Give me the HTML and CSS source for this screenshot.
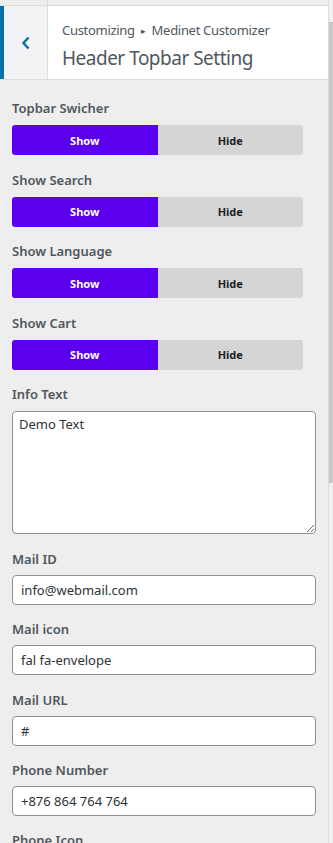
FILE: index.html
```html
<!DOCTYPE html>
<html lang="en">
<head>
<meta charset="UTF-8">
<meta name="viewport" content="width=device-width, initial-scale=1.0">
<title>Header Topbar Setting</title>
<link rel="stylesheet" href="styles.css">
</head>
<body>
    <div class="screen">
        <div class="panel">
            <div class="top-strip"><span class="strip-cell"></span></div>
            <div class="section-head">
                <button class="back" type="button" aria-label="Back">
                    <svg width="10" height="14" viewBox="0 0 10 14"><path d="M7.5 1.5 L2.5 7 L7.5 12.5" fill="none" stroke="#0073aa" stroke-width="2.4"/></svg>
                </button>
                <div class="head-title">
                    <div class="crumbs">Customizing <span class="arrow">&#9656;</span> Medinet Customizer</div>
                    <h3>Header Topbar Setting</h3>
                </div>
            </div>

            <div class="controls">
                <div class="control">
                    <label>Topbar Swicher</label>
                    <div class="switch">
                        <span class="opt on">Show</span>
                        <span class="opt">Hide</span>
                    </div>
                </div>
                <div class="control">
                    <label>Show Search</label>
                    <div class="switch">
                        <span class="opt on">Show</span>
                        <span class="opt">Hide</span>
                    </div>
                </div>
                <div class="control">
                    <label>Show Language</label>
                    <div class="switch">
                        <span class="opt on">Show</span>
                        <span class="opt">Hide</span>
                    </div>
                </div>
                <div class="control">
                    <label>Show Cart</label>
                    <div class="switch">
                        <span class="opt on">Show</span>
                        <span class="opt">Hide</span>
                    </div>
                </div>
                <div class="control">
                    <label for="info">Info Text</label>
                    <textarea id="info">Demo Text</textarea>
                </div>
                <div class="control field">
                    <label for="mail">Mail ID</label>
                    <input type="text" id="mail" value="info@webmail.com">
                </div>
                <div class="control field">
                    <label for="mailIcon">Mail icon</label>
                    <input type="text" id="mailIcon" value="fal fa-envelope">
                </div>
                <div class="control field">
                    <label for="mailUrl">Mail URL</label>
                    <input type="text" id="mailUrl" value="#">
                </div>
                <div class="control field">
                    <label for="phone">Phone Number</label>
                    <input type="text" id="phone" value="+876 864 764 764">
                </div>
                <div class="control field">
                    <label for="phoneIcon">Phone Icon</label>
                    <input type="text" id="phoneIcon" value="fal fa-phone">
                </div>
            </div>
        </div>
        <div class="scrollbar"><div class="thumb"></div></div>
    </div>
</body>
</html>
```

FILE: styles.css
```css
body {
    margin: 0;
    background-color: #eeeeee;
    font-family: "Noto Sans", "Open Sans", sans-serif;
    color: #50575e;
    overflow: hidden;
}
.screen {
    display: flex;
    height: 843px;
}
.panel {
    flex: 1;
    border-right: 1px solid #dcdcde;
    overflow: hidden;
}
.scrollbar {
    width: 4px;
    background: #f0f0f1;
    padding-top: 22px;
}
.thumb {
    height: 461px;
    background: #c8c8c8;
}
.top-strip {
    height: 5px;
    display: flex;
    border-bottom: 1px solid #dcdcde;
}
.strip-cell {
    width: 47px;
    border-right: 1px solid #dcdcde;
}
.section-head {
    display: flex;
    height: 73px;
    background: #fff;
    border-bottom: 1px solid #dcdcde;
}
.back {
    width: 48px;
    border: none;
    border-left: 4px solid #0073aa;
    border-right: 1px solid #dcdcde;
    background: #f3f3f5;
    padding: 0;
    display: flex;
    align-items: center;
    justify-content: center;
    cursor: pointer;
}
.head-title {
    padding: 15px 0 0 14px;
}
.crumbs {
    font-size: 13px;
    line-height: 18px;
    letter-spacing: -0.3px;
}
.arrow {
    font-size: 9px;
    margin: 0 3px;
    vertical-align: 1px;
}
h3 {
    margin: 5px 0 0;
    font-size: 19px;
    font-weight: 400;
    line-height: 26px;
    letter-spacing: -0.5px;
}
.controls {
    padding: 18px 12px 0 12px;
}
.control {
    margin-bottom: 14.6px;
}
.control.field {
    margin-bottom: 14.3px;
}
label {
    display: block;
    font-size: 13px;
    font-weight: 600;
    line-height: 20px;
    margin-bottom: 7px;
}
.field label {
    margin-bottom: 6px;
}
.switch {
    display: flex;
    width: 291px;
    height: 30px;
    border-radius: 3px;
    overflow: hidden;
    background: #d5d5d5;
}
.opt {
    flex: 1;
    display: flex;
    align-items: center;
    justify-content: center;
    font-size: 11px;
    font-weight: 700;
    color: #1d2327;
}
.opt.on {
    background: #5b00ef;
    color: #fff;
}
input[type="text"], textarea {
    display: block;
    width: 100%;
    box-sizing: border-box;
    border: 1px solid #8c8f94;
    border-radius: 4px;
    background: #fff;
    font-family: inherit;
    font-size: 13px;
    color: #2c3338;
}
input[type="text"] {
    height: 30px;
    padding: 0 8px;
}
textarea {
    height: 123px;
    padding: 3px 6px;
    margin-bottom: 7px;
    resize: vertical;
}
```
